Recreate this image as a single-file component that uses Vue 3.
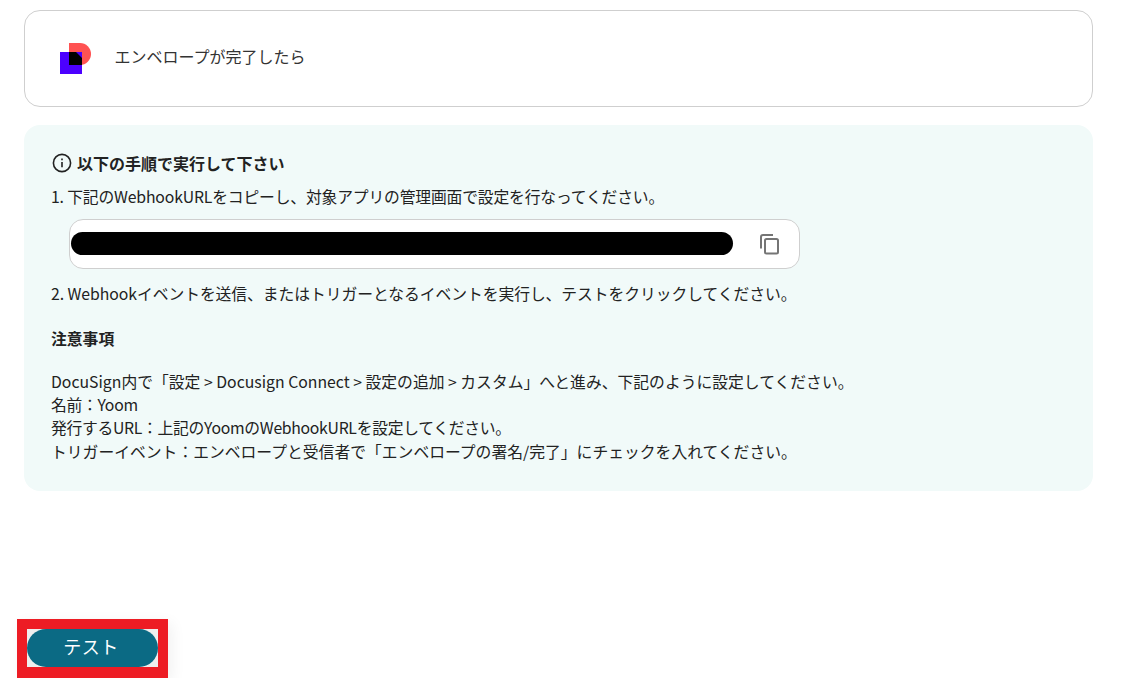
<template>
  <div class="page">
    <div class="trigger">
      <svg class="logo" width="32" height="32" viewBox="0 0 32 32">
        <path d="M9 0H20a11 11 0 0 1 0 22H9Z" fill="#ff5252" />
        <rect x="0" y="9" width="22" height="22" fill="#4c00ff" />
        <path d="M9 9H16L22 15V22H9Z" fill="#000" />
      </svg>
      <span class="trigger-text">エンベロープが完了したら</span>
    </div>
    <section class="info">
      <h2 class="info-title">
        <svg class="info-icon" width="20" height="20" viewBox="0 0 20 20" fill="none" stroke="#222" stroke-width="1.6">
          <circle cx="10" cy="10" r="8.6" />
          <path d="M10 9v5.2" />
          <path d="M10 5.4v1.8" />
        </svg>
        以下の手順で実行して下さい
      </h2>
      <p class="line step-one">1. 下記のWebhookURLをコピーし、対象アプリの管理画面で設定を行なってください。</p>
      <div class="url-box">
        <div class="redact"></div>
        <svg class="copy" width="24" height="24" viewBox="0 0 24 24" fill="none" stroke="#757575" stroke-width="2">
          <path d="M4 16.5V5a2 2 0 0 1 2-2h10" />
          <rect x="8" y="7" width="13" height="14.5" rx="1.5" />
        </svg>
      </div>
      <p class="line step-two">2. Webhookイベントを送信、またはトリガーとなるイベントを実行し、テストをクリックしてください。</p>
      <p class="line note-head">注意事項</p>
      <p class="line note-first">DocuSign内で「設定 &gt; Docusign Connect &gt; 設定の追加 &gt; カスタム」へと進み、下記のように設定してください。</p>
      <p class="line tight">名前：Yoom</p>
      <p class="line tight">発行するURL：上記のYoomのWebhookURLを設定してください。</p>
      <p class="line">トリガーイベント：エンベロープと受信者で「エンベロープの署名/完了」にチェックを入れてください。</p>
    </section>
    <div class="action">
      <div class="mark">
        <button class="test" type="button">テスト</button>
      </div>
    </div>
  </div>
</template>

<script setup>
</script>

<style>
html, body { margin: 0; background: #fff; }
</style>

<style scoped>
.page {
  width: 1145px;
  height: 678px;
  overflow: hidden;
  box-sizing: border-box;
  padding: 10px 52px 0 24px;
  font-family: "Noto Sans CJK JP", "Noto Sans", sans-serif;
  color: #222;
  font-size: 15.8px;
  display: flex;
  flex-direction: column;
}
.trigger {
  height: 97px;
  box-sizing: border-box;
  border: 1px solid #cfcfcf;
  border-radius: 16px;
  display: flex;
  align-items: center;
  padding: 0 0 0 34.5px;
  gap: 23px;
}
.logo { flex: none; margin-top: 1px; }
.trigger-text { font-size: 16px; color: #333; margin-top: -6px; }
.info {
  margin-top: 18px;
  height: 366px;
  box-sizing: border-box;
  background: #f1faf9;
  border-radius: 16px;
  padding: 27px 27px;
}
.info-title {
  margin: 0 0 11px;
  font-size: 16px;
  font-weight: 700;
  line-height: 22px;
  display: flex;
  align-items: center;
  gap: 5px;
}
.info-icon { margin-left: 1px; }
.line { margin: 0; line-height: 23.3px; white-space: nowrap; }
.step-one { letter-spacing: -0.17px; }
.step-two { letter-spacing: -0.06px; }
.tight { letter-spacing: -0.3px; }
.url-box {
  width: 731px;
  height: 50px;
  box-sizing: border-box;
  margin: 11px 0 13px 18px;
  background: #fff;
  border: 1px solid #cfcfcf;
  border-radius: 14px;
  display: flex;
  align-items: center;
  padding-left: 1px;
  padding-bottom: 2px;
}
.redact { width: 662px; height: 23px; background: #000; border-radius: 12px; }
.copy { margin-left: 24px; margin-top: 2px; }
.note-head { font-weight: 700; margin-top: 21px; }
.note-first { margin-top: 20px; }
.action { margin-top: auto; margin-left: -7px; }
.mark {
  width: 151px;
  height: 59px;
  box-sizing: border-box;
  border: 10px solid #ed1c24;
  border-bottom-width: 11px;
  background: #eee;
  box-shadow: 4px 4px 14px rgba(0, 0, 0, 0.06);
}
.test {
  display: block;
  width: 131px;
  height: 38px;
  border: 0;
  background: #0b6a84;
  border-radius: 19px;
  color: #fff;
  font: inherit;
  font-size: 18px;
  letter-spacing: 0.5px;
  padding: 0 3px 4px 0;
}
</style>
